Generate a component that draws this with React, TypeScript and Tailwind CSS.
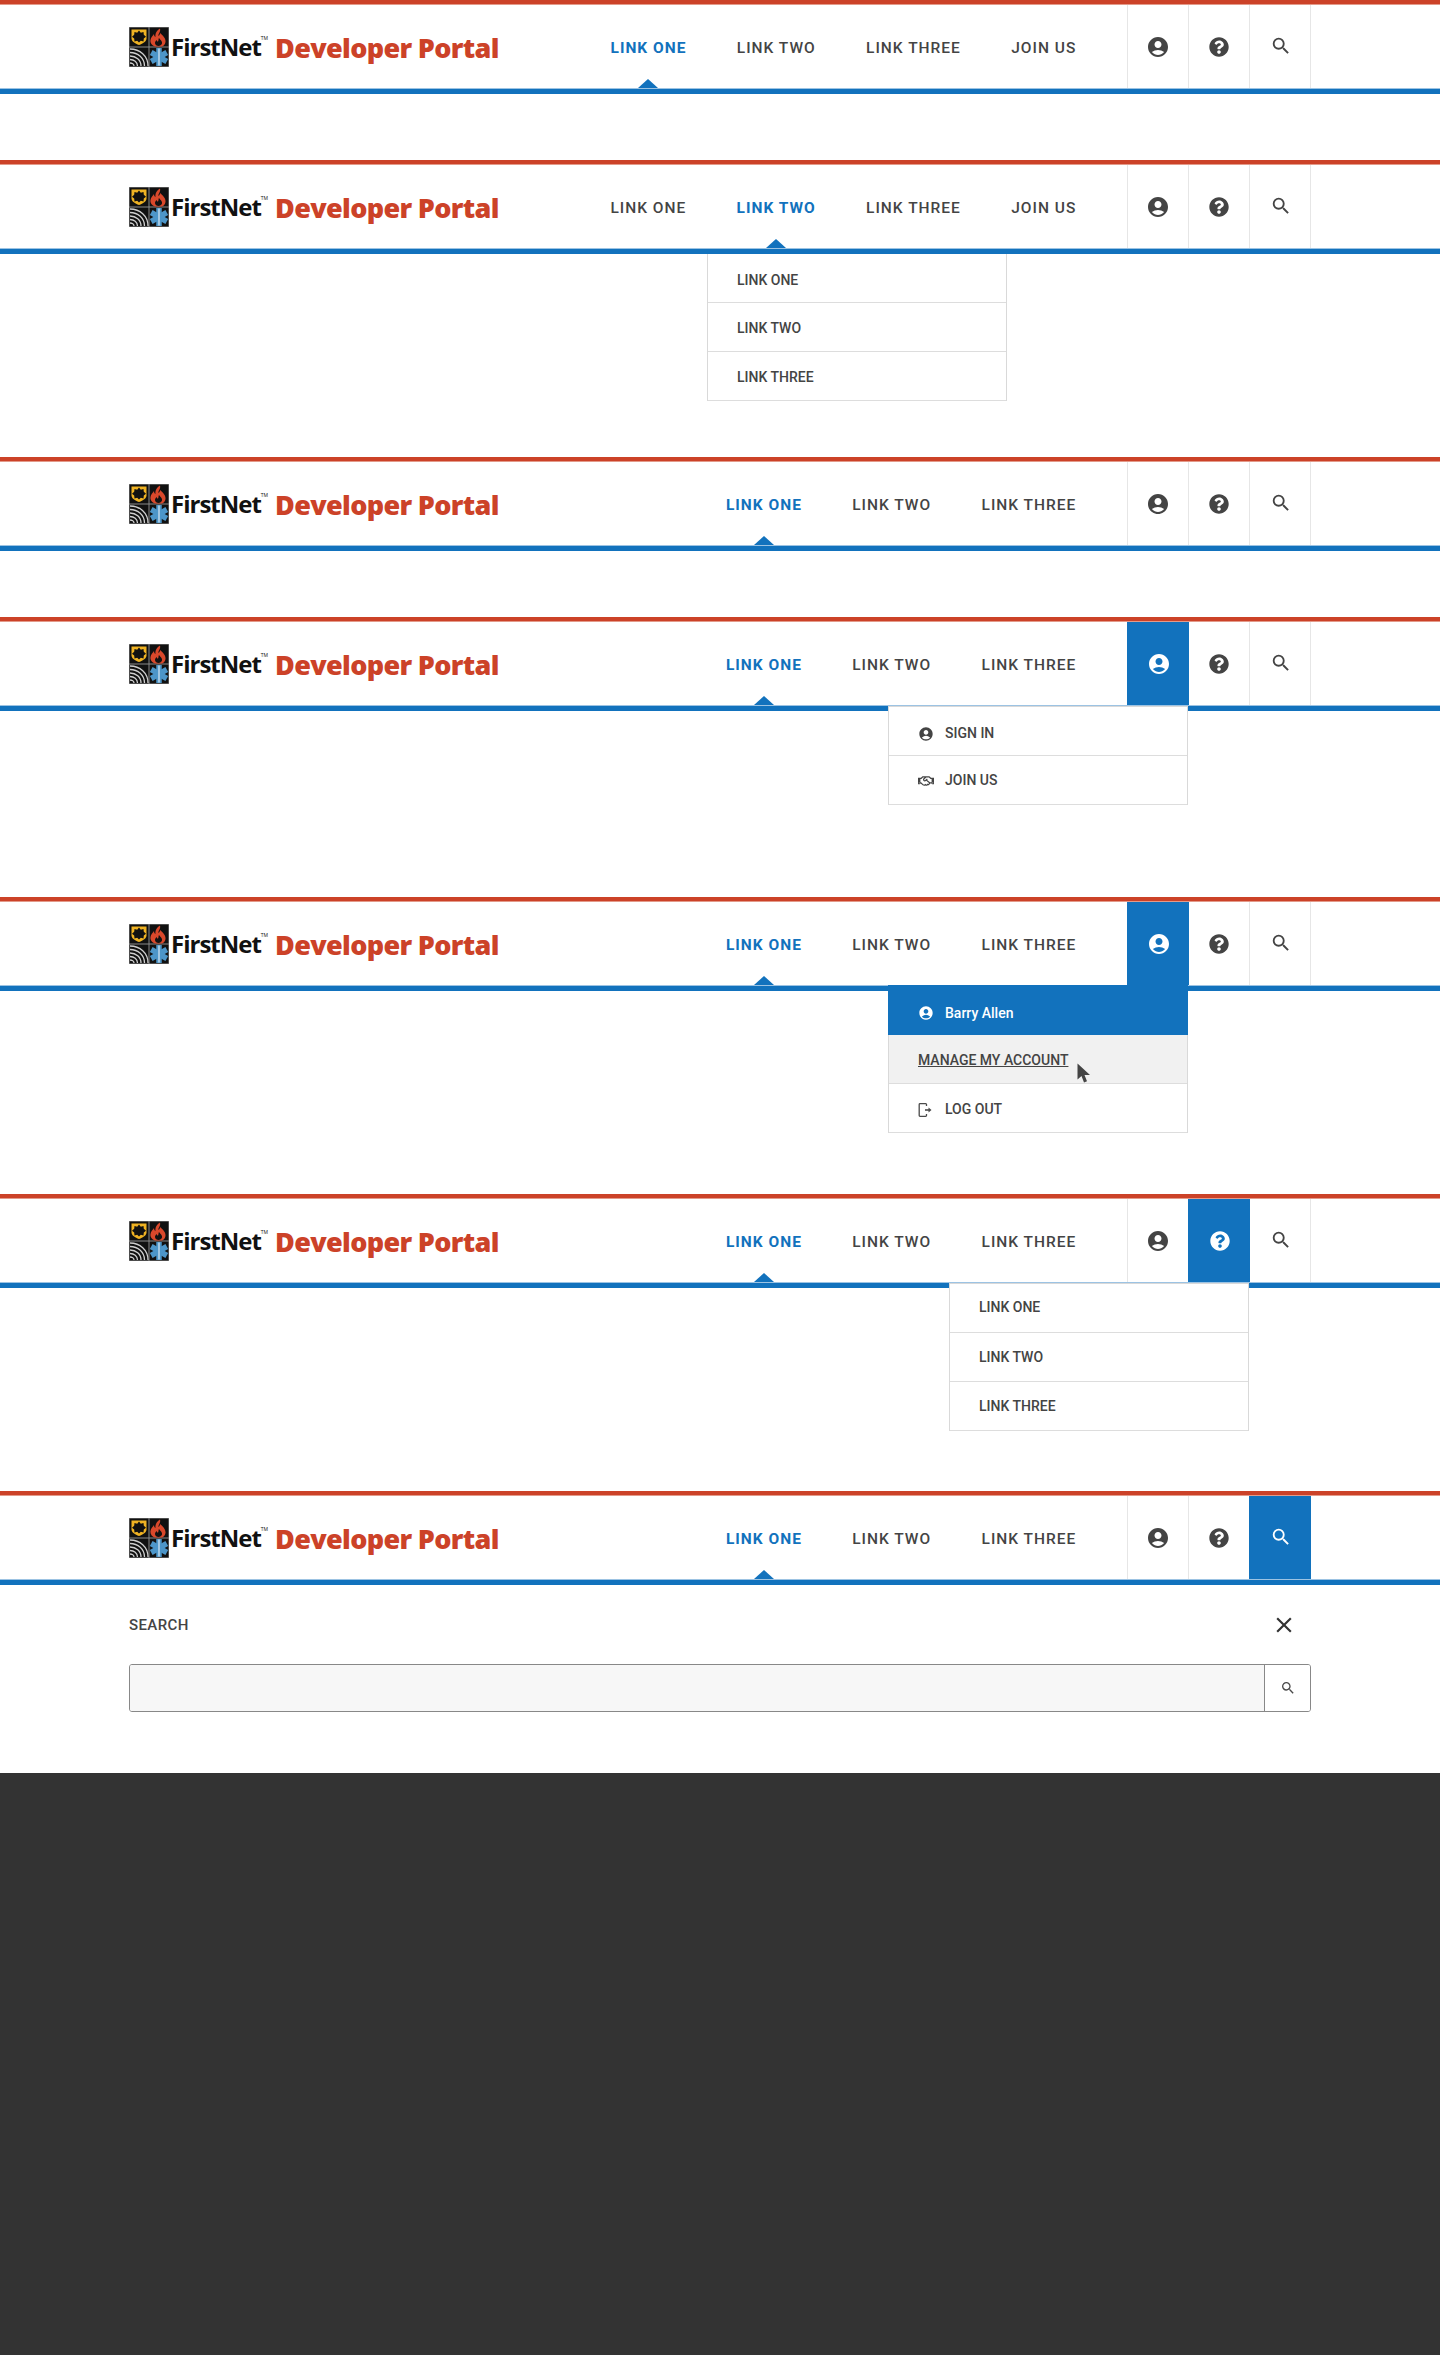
import React from 'react';
import { MdAccountCircle, MdSearch, MdClose } from 'react-icons/md';
import { FaQuestionCircle, FaRegHandshake } from 'react-icons/fa';

const Logo: React.FC = () => (
  <svg width="40" height="40" viewBox="0 0 40 40" className="shrink-0">
    <rect width="40" height="40" fill="#8a8a8a" />
    <rect x="0.5" y="0.5" width="19" height="19" fill="#111" />
    <rect x="20.5" y="0.5" width="19" height="19" fill="#111" />
    <rect x="0.5" y="20.5" width="19" height="19" fill="#111" />
    <rect x="20.5" y="20.5" width="19" height="19" fill="#111" />
    {/* badge */}
    <path d="M2.500 2.500h15v9c0 3-3.500 5-7.500 6.500-4-1.500-7.500-3.500-7.500-6.500z" fill="#f0b323" />
    <path d="M10 3.500l1.800 2.200 2.700-.7.300 2.800 2.200 1.900-2.200 1.900-.3 2.800-2.700-.7L10 15.500l-1.800-1.800-2.700.7-.3-2.800-2.200-1.900 2.200-1.900.3-2.800 2.700.7z" fill="#111" />
    {/* flame */}
    <path d="M31 1.500c1 3.500-2 5-1.500 7.500.800-.8 1.500-1.500 1.500-3 3 2.500 6 5.500 5.500 9-.4 2.500-2 4-3.500 4.500h-7c-3-1-5-3.500-4.500-6.500.4-2.500 2-4 3.500-6 0 1.500.5 2.500 1.500 3-.5-4 1.500-6.500 4.500-8.500z" fill="#d9482b" />
    <path d="M30 11c1.500 2 3.500 3.500 3 5.500-.4 1.500-2 2.500-3.500 2.500s-3.500-1-3.500-3c0-1.500 1-2.500 1.800-3 0 1 .5 1.500 1.200 1.500.7-1 .3-2.500 1-3.500z" fill="#111" />
    {/* signal arcs */}
    <g fill="none" stroke="#cfcfcf" strokeWidth="1.300">
      <path d="M1 22c10 0 18 7 18 17" />
      <path d="M1 25.500c8 0 14.500 5.500 14.500 13.500" />
      <path d="M1 29c6 0 11 4 11 10" />
      <path d="M1 32.500c4 0 7.500 2.500 7.500 6.500" />
      <path d="M1 36c2 0 4 1 4 3" />
    </g>
    {/* star of life */}
    <g stroke="#4d96c9" strokeWidth="5.500">
      <path d="M30 21v18" />
      <path d="M22.200 25.500l15.600 9" />
      <path d="M37.800 25.500l-15.600 9" />
    </g>
    <path d="M30 21.500v17" stroke="#dbeaf5" strokeWidth="1.200" />
  </svg>
);

const Brand: React.FC = () => (
  <div className="flex items-center">
    <Logo />
    <span className="ml-[2px] flex w-[95px] items-start font-['Open_Sans',sans-serif] text-[24px] leading-none font-bold tracking-[-1px] text-[#111]">
      FirstNet
      <span className="mt-[1px] text-[5px] leading-none font-normal tracking-normal">TM</span>
    </span>
    <span className="ml-[9px] font-['Open_Sans',sans-serif] text-[27px] leading-none font-extrabold tracking-[-0.65px] text-[#cc4228]">
      Developer Portal
    </span>
  </div>
);

type IconName = 'user' | 'help' | 'search';

const Header: React.FC<{ links: string[]; active: string; activeIcon?: IconName }> = ({ links, active, activeIcon }) => {
  const iconBtn = (name: IconName) =>
    activeIcon === name ? 'relative z-[1] -mr-px w-[62px] border-[#1272bd] bg-[#1272bd] text-white' : 'w-[61px] border-[#e6e6e6] text-[#444444]';
  return (
    <header className="flex h-[94px] flex-col bg-white">
      <div className="h-[5px] border-b border-[#e39a8a] bg-[#cc4228]" />
      <div className="mx-[129px] flex flex-1 items-stretch">
        <div className="flex items-center pt-[1px]">
          <Brand />
        </div>
        <nav className="ml-auto flex items-stretch pr-[25.500px] font-['Roboto',sans-serif] text-[15.500px] tracking-[1px]">
          {links.map(link => (
            <a
              key={link}
              className={`relative flex items-center px-[25.200px] pt-[4px] ${link === active ? 'font-bold text-[#1272bd]' : 'font-medium text-[#444444]'}`}
            >
              {link}
              {link === active && (
                <span className="absolute bottom-0 left-1/2 h-0 w-0 -translate-x-1/2 border-x-[10px] border-b-[9px] border-x-transparent border-b-[#1272bd]" />
              )}
            </a>
          ))}
        </nav>
        <div className="flex border-r border-[#e6e6e6]">
          <button className={`flex items-center justify-center border-l ${iconBtn('user')}`}>
            <MdAccountCircle size={24} />
          </button>
          <button className={`flex items-center justify-center border-l ${iconBtn('help')}`}>
            <FaQuestionCircle size={20} />
          </button>
          <button className={`flex items-center justify-center border-l pb-[2px] pl-[1px] ${iconBtn('search')}`}>
            <MdSearch size={22} />
          </button>
        </div>
      </div>
      <div className="h-[6px] border-t border-[#9cc3e3] bg-[#1272bd]" />
    </header>
  );
};

const MenuRow: React.FC<{ children: React.ReactNode; className?: string }> = ({ children, className = 'h-[49px] pt-[3px] text-[#444444]' }) => (
  <div className={`flex items-center gap-[11px] border-b border-[#dddddd] px-[29px] font-['Roboto',sans-serif] text-[14px] font-medium ${className}`}>
    {children}
  </div>
);

const LogoutIcon: React.FC = () => (
  <svg width="16" height="14" viewBox="0 0 16 14" fill="none" stroke="#4a4a4a" strokeWidth="1.300">
    <path d="M8.500 3V1.500a.8.800 0 0 0-.8-.8H2a.8.800 0 0 0-.8.800v11a.8.800 0 0 0 .8.800h5.700a.8.800 0 0 0 .8-.8V11" />
    <path d="M7 7h4" strokeWidth="1.600" />
    <path d="M10.500 4.500L13.500 7l-3 2.500z" fill="#4a4a4a" stroke="none" />
  </svg>
);

const CursorIcon: React.FC = () => (
  <svg width="14" height="21" viewBox="0 0 14 21" className="absolute top-[28px] left-[188px]">
    <path d="M0.500 0.500V16.500l4-3.500 2.500 6.500 3-1.200-2.500-6.300h5.500z" fill="#444444" />
  </svg>
);

const links4 = ['LINK ONE', 'LINK TWO', 'LINK THREE', 'JOIN US'];
const links3 = ['LINK ONE', 'LINK TWO', 'LINK THREE'];

const menuBox = 'absolute z-10 w-[300px] border-x border-[#d9d9d9] bg-white';

export default function App() {
  return (
    <div className="flex h-[2355px] flex-col bg-[#333333]">
      <section className="h-[160px] bg-white">
        <Header links={links4} active="LINK ONE" />
      </section>

      <section className="relative h-[297px] bg-white">
        <Header links={links4} active="LINK TWO" />
        <div className={`${menuBox} top-[94px] left-[707px]`}>
          <MenuRow className="h-[49px] pt-[4px] text-[#444444]">LINK ONE</MenuRow>
          <MenuRow>LINK TWO</MenuRow>
          <MenuRow>LINK THREE</MenuRow>
        </div>
      </section>

      <section className="h-[160px] bg-white">
        <Header links={links3} active="LINK ONE" />
      </section>

      <section className="relative h-[280px] bg-white">
        <Header links={links3} active="LINK ONE" activeIcon="user" />
        <div className={`${menuBox} top-[89px] left-[888px] border-t`}>
          <MenuRow className="h-[49px] pt-[5px] text-[#444444]">
            <MdAccountCircle size={16} />
            SIGN IN
          </MenuRow>
          <MenuRow className="h-[49px] pt-[1px] text-[#444444]">
            <FaRegHandshake size={16} />
            JOIN US
          </MenuRow>
        </div>
      </section>

      <section className="relative h-[297px] bg-white">
        <Header links={links3} active="LINK ONE" activeIcon="user" />
        <div className={`${menuBox} top-[88px] left-[888px]`}>
          <MenuRow className="-mx-px h-[50px] border-b-0 bg-[#1272bd] pt-[6px] pl-[30px] text-white">
            <MdAccountCircle size={16} />
            Barry Allen
          </MenuRow>
          <MenuRow className="relative h-[49px] bg-[#f1f1f1] pt-[2px] text-[#444444]">
            <span className="underline">MANAGE MY ACCOUNT</span>
            <CursorIcon />
          </MenuRow>
          <MenuRow>
            <LogoutIcon />
            LOG OUT
          </MenuRow>
        </div>
      </section>

      <section className="relative h-[297px] bg-white">
        <Header links={links3} active="LINK ONE" activeIcon="help" />
        <div className={`${menuBox} top-[89px] left-[949px] border-t`}>
          <MenuRow className="h-[49px] pb-[2px] text-[#444444]">LINK ONE</MenuRow>
          <MenuRow className="h-[49px] pt-[1px] text-[#444444]">LINK TWO</MenuRow>
          <MenuRow className="h-[49px] pt-[1px] text-[#444444]">LINK THREE</MenuRow>
        </div>
      </section>

      <section className="h-[282px] bg-white">
        <Header links={links3} active="LINK ONE" activeIcon="search" />
        <div className="mx-[129px] pt-[27px]">
          <div className="flex items-center justify-between pr-[14px] font-['Roboto',sans-serif] text-[15px] font-medium tracking-[0.4px] text-[#444444]">
            SEARCH
            <MdClose size={26} className="text-[#333333]" />
          </div>
          <div className="mt-[26px] flex h-[48px] overflow-hidden rounded-[3px] border border-[#888888]">
            <div className="flex-1 bg-[#f7f7f7]" />
            <button className="flex w-[46px] items-center justify-center border-l border-[#888888] bg-white text-[#4a4a4a]">
              <MdSearch size={16} />
            </button>
          </div>
        </div>
      </section>
    </div>
  );
}
